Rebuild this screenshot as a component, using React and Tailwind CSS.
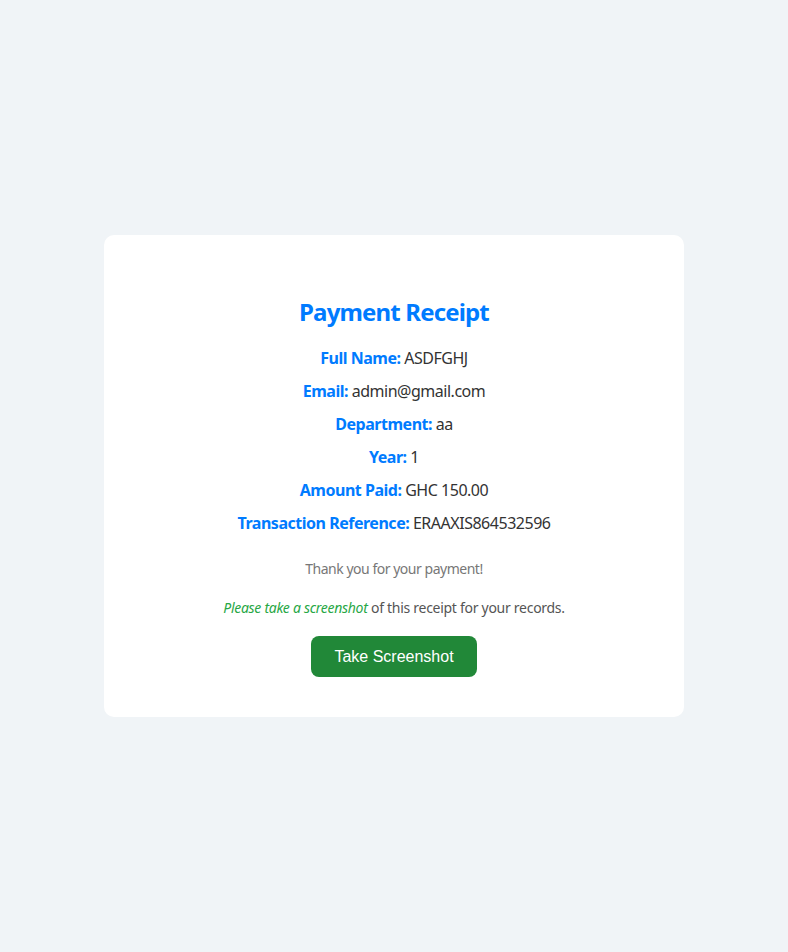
export default function App() {
  const rows = [
    ["Full Name:", "ASDFGHJ"],
    ["Email:", "admin@gmail.com"],
    ["Department:", "aa"],
    ["Year:", "1"],
    ["Amount Paid:", "GHC 150.00"],
    ["Transaction Reference:", "ERAAXIS864532596"],
  ];
  return (
    <div className="min-h-[952px] w-full bg-[#f0f4f7] flex items-center justify-center" style={{ fontFamily: '"Noto Sans", sans-serif' }}>
      <div className="w-[580px] bg-white rounded-[10px] px-10 pt-[41px] pb-10 flex flex-col items-center text-center tracking-[-0.03em]">
        <h2 className="mt-5 mb-5 text-[24px] leading-[32px] font-bold text-[#007bff] tracking-[-0.035em]">Payment Receipt</h2>
        {rows.map(([k, v]) => (
          <p key={k} className="mb-3 text-[16px] leading-[21px] text-[#333]">
            <span className="font-bold text-[#007bff]">{k}</span> {v}
          </p>
        ))}
        <p className="mt-[13px] text-[14px] leading-[19px] text-[#777]">Thank you for your payment!</p>
        <p className="mt-5 text-[14px] leading-[19px] text-[#555] tracking-[-0.02em]">
          <em className="text-[#28a745]">Please take a screenshot</em> of this receipt for your records.
        </p>
        <button className="mt-[19px] w-[166px] h-[41px] rounded-lg bg-[#218838] text-white text-[16px] tracking-normal" style={{ fontFamily: '"Liberation Sans", Arial, sans-serif' }}>
          Take Screenshot
        </button>
      </div>
    </div>
  );
}
